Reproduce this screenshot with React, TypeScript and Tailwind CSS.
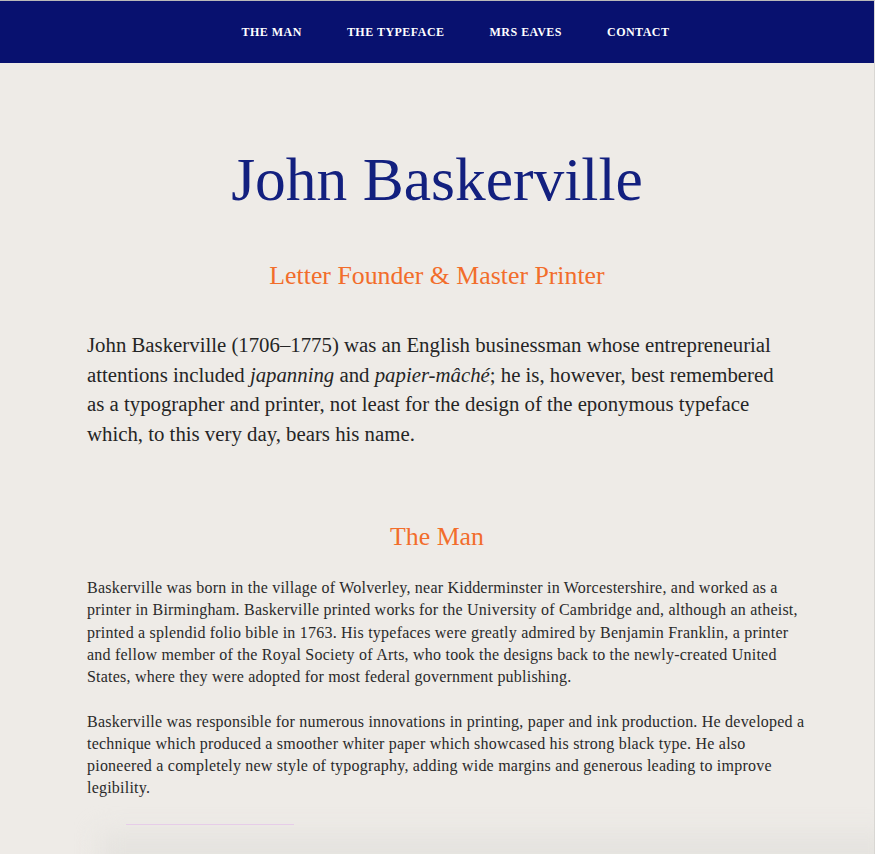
import React from 'react';

const NAV = ['The Man', 'The Typeface', 'Mrs Eaves', 'Contact'];

export default function App() {
  return (
    <div
      className="min-h-screen bg-[#eeebe7] border-t border-t-[#b9b9b9] border-r border-r-[#d9d7d3] relative overflow-hidden"
      style={{ fontFamily: '"Liberation Serif", "Times New Roman", serif' }}
    >
      {/* Nav */}
      <nav className="bg-[#08116f] h-[62px] flex items-center justify-center">
        <ul className="flex gap-[45px] pl-[37px] text-[12px] font-bold uppercase tracking-[0.04em] text-white">
          {NAV.map((item) => (
            <li key={item}>{item}</li>
          ))}
        </ul>
      </nav>

      <main className="max-w-[700px] mx-auto pb-16">
        <h1 className="text-center text-[61.5px] leading-none text-[#13207f] mt-[86px]">John Baskerville</h1>
        <h2 className="text-center text-[25.8px] leading-none text-[#f26d2b] mt-[52px]">
          Letter Founder &amp; Master Printer
        </h2>
        <p className="text-[20.8px] leading-[29.5px] text-[#252525] mt-[42px]">
          John Baskerville (1706–1775) was an English businessman whose entrepreneurial attentions included{' '}
          <em>japanning</em> and <em>papier-mâché</em>; he is, however, best remembered as a typographer and
          printer, not least for the design of the eponymous typeface which, to this very day, bears his name.
        </p>

        <h2 className="text-center text-[25.8px] leading-none text-[#f26d2b] mt-[76px]">The Man</h2>
        <p className="text-[16px] leading-[22.3px] tracking-[0.22px] text-[#2a2a2a] mt-[27px] mr-[-30px]">
          Baskerville was born in the village of Wolverley, near Kidderminster in Worcestershire, and worked as a
          <br />
          printer in Birmingham. Baskerville printed works for the University of Cambridge and, although an atheist,
          <br />
          printed a splendid folio bible in 1763. His typefaces were greatly admired by Benjamin Franklin, a printer
          <br />
          and fellow member of the Royal Society of Arts, who took the designs back to the newly-created United
          <br />
          States, where they were adopted for most federal government publishing.
        </p>
        <p className="text-[16px] leading-[22.3px] tracking-[0.22px] text-[#2a2a2a] mt-[22px] mr-[-30px]">
          Baskerville was responsible for numerous innovations in printing, paper and ink production. He developed a
          <br />
          technique which produced a smoother whiter paper which showcased his strong black type. He also
          <br />
          pioneered a completely new style of typography, adding wide margins and generous leading to improve
          <br />
          legibility.
        </p>
      </main>

      {/* faint shadowed panel peeking in at the bottom edge */}
      <div className="absolute left-[100px] right-[-20px] top-[832px] h-[60px] bg-[#e5e3df] blur-md" />
      <div className="absolute left-[126px] top-[823px] w-[168px] h-px bg-[#e6cde8]" />
    </div>
  );
}
